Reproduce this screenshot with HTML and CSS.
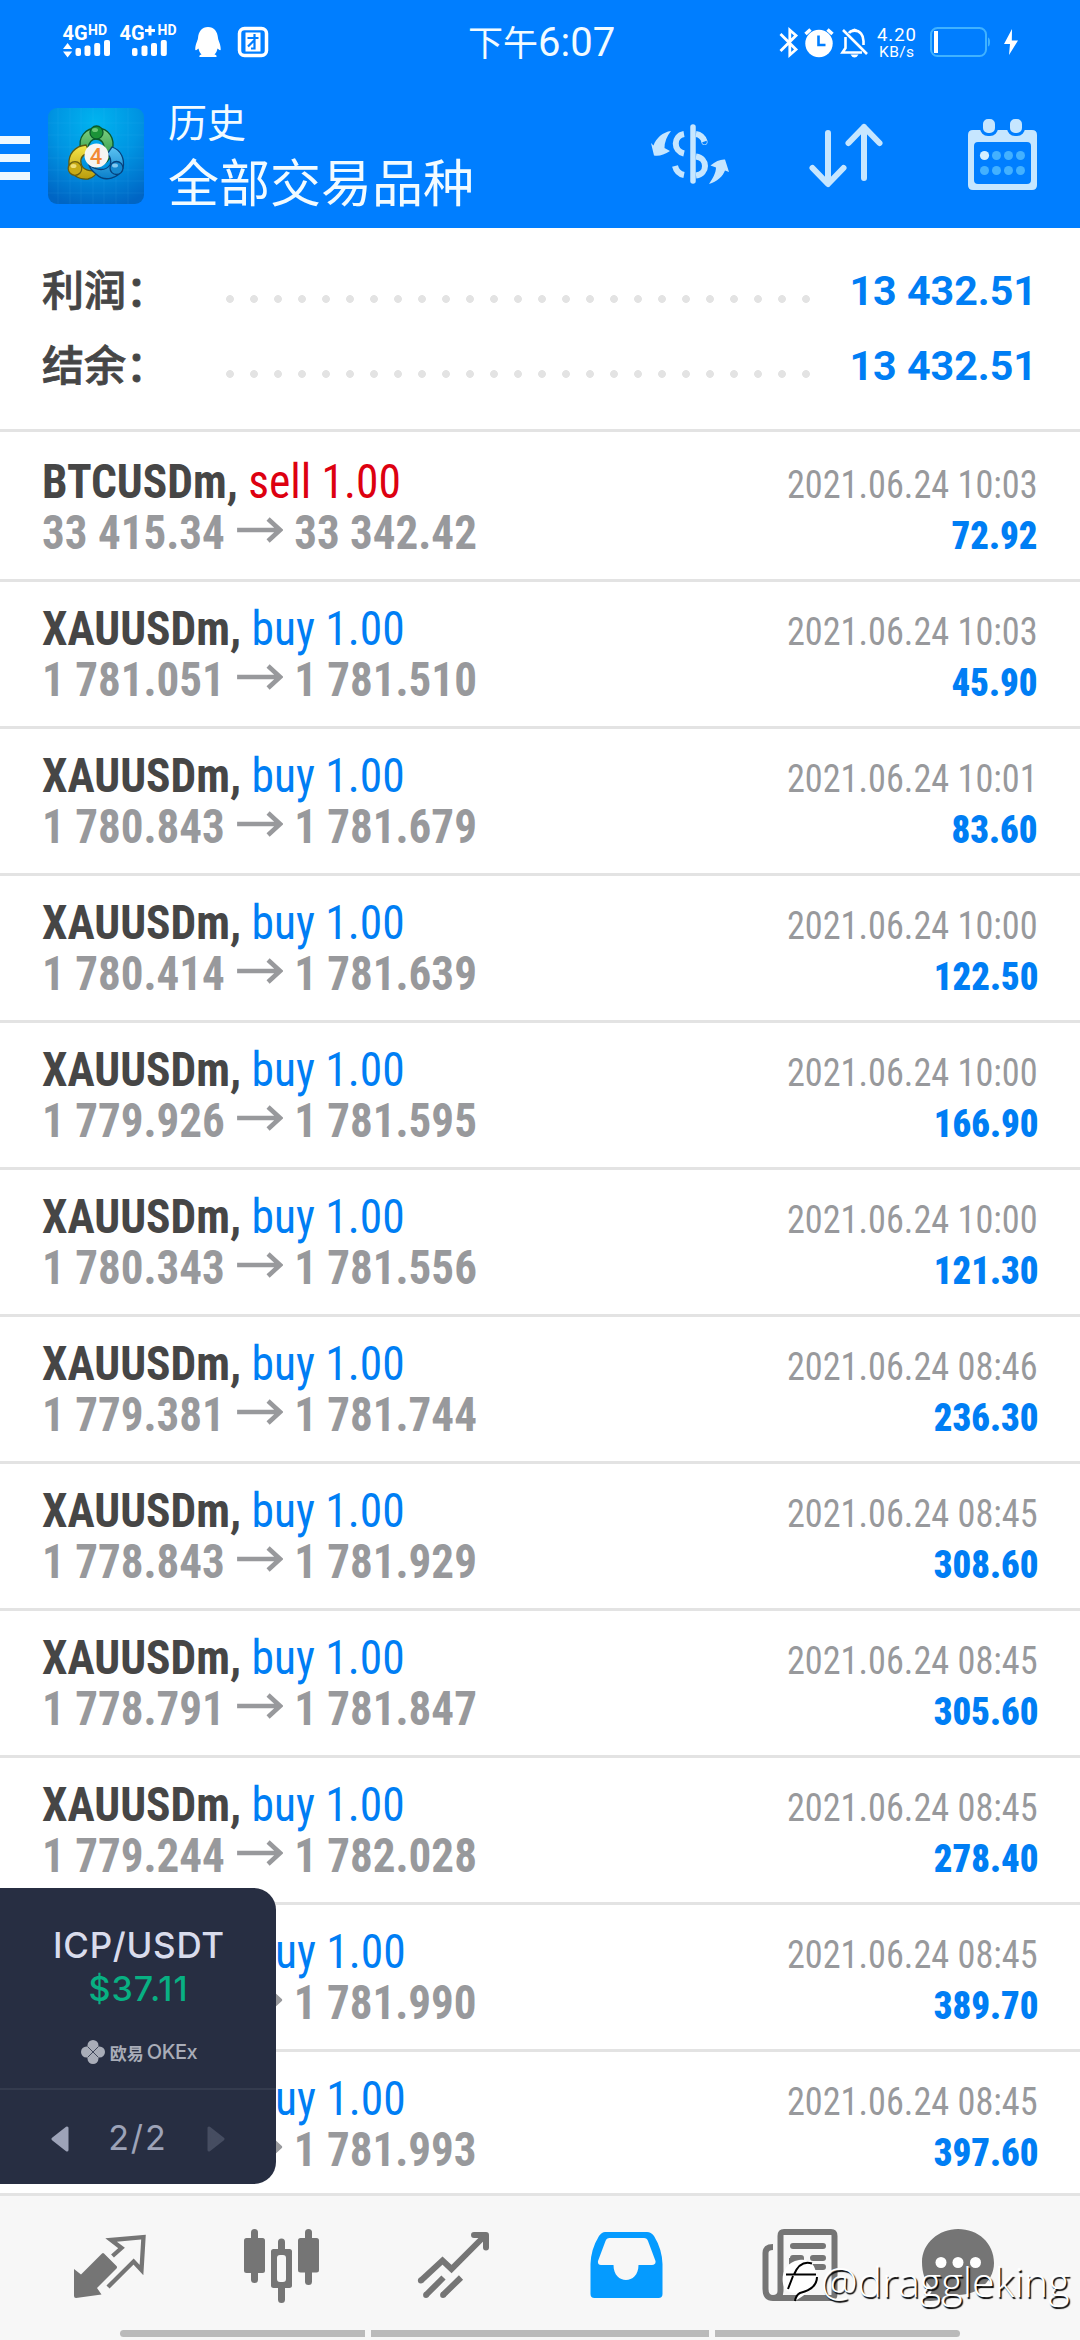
FILE: index.html
```html
<!DOCTYPE html>
<html lang="zh-CN">
<head>
<meta charset="utf-8">
<title>历史</title>
<link rel="stylesheet" href="styles.css">
</head>
<body>
<svg width="0" height="0" class="defs">
  <symbol id="arrow" viewBox="0 0 46 26" preserveAspectRatio="none"><path d="M0 13H42M31 2L43 13L31 24" fill="none" stroke="currentColor" stroke-width="4.6"/></symbol>
</svg>
<div class="screen">
  <header class="header">
    <div class="statusbar">
      <svg class="status-left" viewBox="60 20 220 44" width="220" height="44">
        <g fill="#fff">
          <g font-family="Roboto, sans-serif" font-weight="700">
            <text x="62.500" y="39.500" font-size="20">4G</text>
            <text x="88" y="35" font-size="14">HD</text>
            <text x="119.500" y="39.500" font-size="20">4G</text>
            <text x="157.500" y="35" font-size="14">HD</text>
          </g>
          <path d="M145 29h10v3h-10zM148.500 25.500h3v10h-3z"/>
          <path d="M63 49l4.600-6 4.600 6zM63 51.500h9.200l-4.600 6z"/>
          <rect x="75.500" y="48" width="5.500" height="8" rx="2"/>
          <rect x="84.500" y="45.500" width="6" height="10.500" rx="2"/>
          <rect x="94.200" y="43" width="6" height="13" rx="2"/>
          <rect x="104" y="40" width="6" height="16" rx="2"/>
          <rect x="132" y="48" width="5.500" height="8" rx="2"/>
          <rect x="141.500" y="45.500" width="6" height="10.500" rx="2"/>
          <rect x="151" y="43" width="6" height="13" rx="2"/>
          <rect x="160.800" y="40" width="6" height="16" rx="2"/>
          <path d="M208 27C214 27 217.500 31.500 218 38C218.300 41 221 44.500 220.700 50C219.800 50.500 218.500 49.500 217.500 48.500C217 51 216 53 214.500 54.500C217 55 217 57 216 57H200C199 57 199 55 201.500 54.500C200 53 199 51 198.500 48.500C197.500 49.500 196.200 50.500 195.300 50C195 44.500 197.700 41 198 38C198.500 31.500 202 27 208 27Z"/>
        </g>
        <rect x="239.500" y="28.500" width="27" height="27" rx="5" fill="#007eff" stroke="#fff" stroke-width="3.500"/>
        <rect x="245.500" y="32.500" width="15" height="19" fill="#fff"/>
        <path d="M247.500 38H258.500M254.500 34V48.500H251M254 40.500L248 46.500" fill="none" stroke="#007eff" stroke-width="2.200"/>
      </svg>
      <div class="clock"><span class="ampm">下午</span>6:07</div>
      <svg class="status-right" viewBox="776 20 250 44" width="250" height="44">
        <path d="M780.500 34L796 49.500L789.800 55V30L796 35.500L780.500 51" fill="none" stroke="#fff" stroke-width="2.800"/>
        <circle cx="819" cy="43.500" r="13.700" fill="#fff"/>
        <path d="M805.500 34L810.500 29.500M832.500 34L827.500 29.500" stroke="#fff" stroke-width="3.500"/>
        <path d="M818.500 35.500V45H825.500" fill="none" stroke="#007eff" stroke-width="2.600"/>
        <path d="M843 30L867 54M845.500 37V48L842.500 52.500H862M849 33.200C850 31.500 852 30.600 854.500 30.600C860 30.600 863.500 35 863.500 41V45" fill="none" stroke="#fff" stroke-width="2.600"/>
        <path d="M850.500 54.500H858.500Q857 57.500 854.500 57.500Q852 57.500 850.500 54.500ZM851.500 31Q852 28.500 854.500 28.500Q857 28.500 857.500 31Z" fill="#fff"/>
        <text x="877" y="41" font-family="Roboto, sans-serif" font-size="18.500" textLength="39" fill="#fff">4.20</text>
        <text x="879" y="57" font-family="Roboto, sans-serif" font-size="15.500" textLength="35" fill="#fff">KB/s</text>
        <rect x="931" y="28" width="55" height="28" rx="6.500" fill="none" stroke="#40b2ff" stroke-width="2"/>
        <rect x="934" y="31" width="4" height="22" fill="#fff"/>
        <path d="M988 37.500Q990 38 990 42T988 46.500Z" fill="#40b2ff"/>
        <path d="M1012 29L1004 44H1010L1009 55L1018 40.500H1011.800Z" fill="#fff"/>
      </svg>
    </div>
    <div class="toolbar">
      <svg class="menu" viewBox="0 0 30 44" width="30" height="44"><path d="M0 0H30V8H0ZM0 18H30V26H0ZM0 36H30V44H0Z" fill="#eef8ff"/></svg>
      <svg class="logo" viewBox="0 0 96 96" width="96" height="96">
        <defs>
          <radialGradient id="sky" cx=".5" cy=".15" r=".9"><stop offset="0" stop-color="#00b4f0"/><stop offset=".5" stop-color="#0094e2"/><stop offset="1" stop-color="#0065c4"/></radialGradient>
          <linearGradient id="grn" x2="0" y2="1"><stop offset="0" stop-color="#7ed083"/><stop offset="1" stop-color="#188a32"/></linearGradient>
          <linearGradient id="yel" x2="0" y2="1"><stop offset="0" stop-color="#f7e64a"/><stop offset="1" stop-color="#b99c0c"/></linearGradient>
          <linearGradient id="blu" x2="0" y2="1"><stop offset="0" stop-color="#5cc3f2"/><stop offset="1" stop-color="#0a7fcb"/></linearGradient>
        </defs>
        <rect width="96" height="96" rx="9" fill="url(#sky)"/>
        <path d="M10 0V96M22 0V96M33 0V96M45 0V96M56 0V96M68 0V96M80 0V96M0 15H96M0 27H96M0 39H96M0 50H96M0 62H96M0 73H96M0 85H96" stroke="#5cc8ff" stroke-opacity=".1"/>
        <g stroke-width="1.300">
          <path d="M33 42C29 29 38 20 49 20C60 20 68 30 64 43C63 52 56 57 48 59L56 43C57 35 53 31 48 31C43 31 41 35 40 40Z" fill="url(#grn)" stroke="#0b5a2b"/>
          <path d="M38 37C27 38 20 46 21 57C22 66 30 72 40 71C45 70 49 66 50 62C42 64 34 62 33 55C32 49 36 46 42 45Z" fill="url(#yel)" stroke="#5c5a10"/>
          <path d="M64 39C73 42 77 51 75 60C71 70 57 75 48 66C44 63 42 60 41 57C49 63 58 63 62 57C64 53 62 48 59 46Z" fill="url(#blu)" stroke="#06427e"/>
          <circle cx="48.500" cy="24.500" r="6.500" fill="#1b9338" stroke="#0b5a2b"/>
          <circle cx="27" cy="60.500" r="6.800" fill="#c8ab16" stroke="#6b5f10"/>
          <circle cx="68.500" cy="60" r="6.500" fill="#1588cf" stroke="#06427e"/>
        </g>
        <ellipse cx="47" cy="22" rx="3" ry="2" fill="#8cdc90" opacity=".7"/><ellipse cx="25.500" cy="58" rx="3" ry="2" fill="#fff3a0" opacity=".7"/><ellipse cx="67" cy="57.500" rx="3" ry="2" fill="#b0e4ff" opacity=".7"/>
        <circle cx="48.500" cy="47.500" r="12" fill="#f6f5f3"/>
        <text x="48" y="55.500" text-anchor="middle" font-family="Roboto, sans-serif" font-weight="500" font-size="22" fill="#f28a35">4</text>
      </svg>
      <div class="titles"><div class="subtitle">历史</div><div class="title">全部交易品种</div></div>
      <svg class="actions" viewBox="640 110 440 90" width="440" height="90">
        <g fill="none" stroke="#c6e6ff" stroke-width="5.500">
          <path d="M693 127V181" stroke-linecap="round"/>
          <path d="M684 134C673 136 673 151 684 153.500M696 134C700 134.500 703 137 704.500 141.500" stroke-width="6"/>
          <path d="M696 156.500C708 158 708 174 696 175.500M684 175C679 174 676 170 675 166" stroke-width="6"/>
          <circle cx="704.500" cy="142" r=".3" stroke-linecap="round"/>
        </g>
        <path d="M671 131C663 132 656 138 653.500 145.500L651 143L654 155.500Q661 157 670 151L664.500 148Q664.500 139 671 131Z" fill="#c6e6ff"/>
        <path d="M709 184C712.500 179 716 173 716 167.500L710.500 165.500Q718 159 725 159.500L729 172L725 170.500C723 176 717 182 709 184Z" fill="#c6e6ff"/>
        <path d="M828 133V183M812.500 168L828 184L843.500 168M864 178V127M848.500 143L864 127L879.500 143" fill="none" stroke="#c6e6ff" stroke-width="6" stroke-linecap="round" stroke-linejoin="round"/>
        <path d="M973 130H1032Q1037 130 1037 135V185Q1037 190 1032 190H973Q968 190 968 185V135Q968 130 973 130ZM978 142Q974 142 974 146V180Q974 184 978 184H1027Q1031 184 1031 180V146Q1031 142 1027 142Z" fill="#c6e6ff" fill-rule="evenodd"/>
        <g fill="#c6e6ff" stroke="#007eff" stroke-width="3"><rect x="981.500" y="117.500" width="15" height="17" rx="6.500"/><rect x="1008.500" y="117.500" width="15" height="17" rx="6.500"/></g>
        <circle cx="984.500" cy="155.500" r="4.600" fill="#d6efff"/>
        <g fill="#43b1ff"><circle cx="996.500" cy="155.500" r="4.500"/><circle cx="1008.500" cy="155.500" r="4.500"/><circle cx="1020.500" cy="155.500" r="4.500"/><circle cx="984.500" cy="170.500" r="4.500"/><circle cx="996.500" cy="170.500" r="4.500"/><circle cx="1008.500" cy="170.500" r="4.500"/><circle cx="1020.500" cy="170.500" r="4.500"/></g>
      </svg>
    </div>
  </header>

  <section class="summary">
    <div class="sum"><span class="label">利润：</span><i class="dots"></i><b>13 432.51</b></div>
    <div class="sum"><span class="label">结余：</span><i class="dots"></i><b>13 432.51</b></div>
  </section>

  <main class="deals">
    <article class="deal"><div class="line"><span><b>BTCUSDm,</b> <em class="sell">sell 1.00</em></span><time>2021.06.24 10:03</time></div><div class="line price"><span>33 415.34<svg class="to"><use href="#arrow"/></svg>33 342.42</span><b class="profit">72.92</b></div></article>
    <article class="deal"><div class="line"><span><b>XAUUSDm,</b> <em>buy 1.00</em></span><time>2021.06.24 10:03</time></div><div class="line price"><span>1 781.051<svg class="to"><use href="#arrow"/></svg>1 781.510</span><b class="profit">45.90</b></div></article>
    <article class="deal"><div class="line"><span><b>XAUUSDm,</b> <em>buy 1.00</em></span><time>2021.06.24 10:01</time></div><div class="line price"><span>1 780.843<svg class="to"><use href="#arrow"/></svg>1 781.679</span><b class="profit">83.60</b></div></article>
    <article class="deal"><div class="line"><span><b>XAUUSDm,</b> <em>buy 1.00</em></span><time>2021.06.24 10:00</time></div><div class="line price"><span>1 780.414<svg class="to"><use href="#arrow"/></svg>1 781.639</span><b class="profit">122.50</b></div></article>
    <article class="deal"><div class="line"><span><b>XAUUSDm,</b> <em>buy 1.00</em></span><time>2021.06.24 10:00</time></div><div class="line price"><span>1 779.926<svg class="to"><use href="#arrow"/></svg>1 781.595</span><b class="profit">166.90</b></div></article>
    <article class="deal"><div class="line"><span><b>XAUUSDm,</b> <em>buy 1.00</em></span><time>2021.06.24 10:00</time></div><div class="line price"><span>1 780.343<svg class="to"><use href="#arrow"/></svg>1 781.556</span><b class="profit">121.30</b></div></article>
    <article class="deal"><div class="line"><span><b>XAUUSDm,</b> <em>buy 1.00</em></span><time>2021.06.24 08:46</time></div><div class="line price"><span>1 779.381<svg class="to"><use href="#arrow"/></svg>1 781.744</span><b class="profit">236.30</b></div></article>
    <article class="deal"><div class="line"><span><b>XAUUSDm,</b> <em>buy 1.00</em></span><time>2021.06.24 08:45</time></div><div class="line price"><span>1 778.843<svg class="to"><use href="#arrow"/></svg>1 781.929</span><b class="profit">308.60</b></div></article>
    <article class="deal"><div class="line"><span><b>XAUUSDm,</b> <em>buy 1.00</em></span><time>2021.06.24 08:45</time></div><div class="line price"><span>1 778.791<svg class="to"><use href="#arrow"/></svg>1 781.847</span><b class="profit">305.60</b></div></article>
    <article class="deal"><div class="line"><span><b>XAUUSDm,</b> <em>buy 1.00</em></span><time>2021.06.24 08:45</time></div><div class="line price"><span>1 779.244<svg class="to"><use href="#arrow"/></svg>1 782.028</span><b class="profit">278.40</b></div></article>
    <article class="deal clipped"><div class="line"><span><em>uy 1.00</em></span><time>2021.06.24 08:45</time></div><div class="line price"><span><svg class="to"><use href="#arrow"/></svg>1 781.990</span><b class="profit">389.70</b></div></article>
    <article class="deal clipped"><div class="line"><span><em>uy 1.00</em></span><time>2021.06.24 08:45</time></div><div class="line price"><span><svg class="to"><use href="#arrow"/></svg>1 781.993</span><b class="profit">397.60</b></div></article>
  </main>

  <nav class="tabs">
    <div class="tab-row">
      <svg viewBox="24 2216 172 100"><path d="M74 2269L81 2274.500L102 2253.500Q103 2252.500 104 2253.500L116.500 2266Q117.500 2267 116.500 2268.500L97 2288L101.500 2294.500L76 2298Q74 2298 74 2296Z" fill="#757575"/><path d="M112.500 2256L121.500 2248L111 2240L143.500 2237L141.500 2270L133.600 2261.500L108 2287" fill="none" stroke="#757575" stroke-width="4.300"/></svg>
      <svg viewBox="196 2216 172 100"><g fill="#757575"><rect x="244" y="2238" width="21" height="35" rx="2.500"/><rect x="251" y="2229" width="7" height="54" rx="3.500"/><rect x="298" y="2238" width="21" height="34.500" rx="2.500"/><rect x="305" y="2229" width="7" height="56" rx="3.500"/><path d="M278 2249V2242A3.500 3.500 0 0 1 285 2242V2249H289.500Q292 2249 292 2251.500V2285.500Q292 2288 289.500 2288H285V2299.500A3.500 3.500 0 0 1 278 2299.500V2288H273.500Q271 2288 271 2285.500V2251.500Q271 2249 273.500 2249ZM280 2255Q277 2255 277 2258V2279Q277 2282 280 2282H283Q286 2282 286 2279V2258Q286 2255 283 2255Z" fill-rule="evenodd"/></g></svg>
      <svg viewBox="368 2216 172 100"><g fill="none" stroke="#757575" stroke-width="6"><path d="M421 2280.500L442.500 2260.500L451.500 2269L485 2235.500M426 2295L443.500 2277.500M443 2295L461 2277.500"/><path d="M474 2235H486V2247.500" stroke-linecap="round" stroke-linejoin="round"/></g><g fill="#757575"><circle cx="420.800" cy="2280.500" r="2.900"/><circle cx="426" cy="2295" r="2.900"/><circle cx="443" cy="2295" r="2.900"/></g></svg>
      <svg viewBox="540 2216 172 100"><path d="M605 2232H647Q651 2232 654 2236Q662 2249 662.500 2264V2294Q662.500 2298 658.500 2298H594.500Q590.500 2298 590.500 2294V2264Q591 2249 599 2236Q602 2232 605 2232ZM609.500 2238Q606.500 2238 605.500 2241L598 2261Q597.500 2265 601 2265H613.500C613.500 2285 638.500 2285 638.500 2265H652Q656 2265 655.500 2261L648 2241Q647 2238 644 2238Z" fill="#059bff" fill-rule="evenodd"/></svg>
      <svg viewBox="712 2216 172 100"><g fill="none" stroke="#757575" stroke-width="6"><path d="M773 2247Q765.500 2247 765.500 2253V2289Q765.500 2298 773 2298H831Q834.500 2298 834.500 2294V2236Q834.500 2232 831 2232H784Q780.500 2232 780.500 2236V2291Q780.500 2298 773 2298"/><path d="M793 2246H823" stroke-linecap="round"/><path d="M793 2258H801M813 2258H823M813 2267H823" stroke-linecap="round"/><path d="M792 2258V2271H801V2258"/></g></svg>
      <svg viewBox="884 2216 172 100"><path d="M958 2229C978 2229 994 2243 994 2263C994 2280 979 2295 958 2295C949 2298 934 2303 922 2300Q932 2296 932 2288C925 2282 922 2273 922 2262C922 2243 939 2229 958 2229Z" fill="#757575"/><g fill="#fff"><circle cx="941" cy="2262.500" r="5.500"/><circle cx="958" cy="2262.500" r="5.500"/><circle cx="975.500" cy="2262.500" r="5.500"/></g></svg>
    </div>
    <div class="gesture"><i></i><i></i><i></i></div>
  </nav>

  <aside class="widget">
    <div class="quote">
      <div class="pair">ICP/USDT</div>
      <div class="rate">$37.11</div>
      <div class="brand"><svg viewBox="0 0 24 24" width="24" height="24"><g fill="#a9adb8"><circle cx="12" cy="5.500" r="5.500"/><circle cx="5.500" cy="12" r="5.500"/><circle cx="18.500" cy="12" r="5.500"/><circle cx="12" cy="18.500" r="5.500"/><circle cx="12" cy="12" r="5"/></g><path d="M7 7L17 17M17 7L7 17" stroke="#272e42" stroke-width=".8"/></svg><span class="cn">欧易</span><span class="en">OKEx</span></div>
    </div>
    <div class="pager">
      <svg viewBox="0 0 18 26" width="18" height="26"><path d="M16 2V24L2 13Z" fill="#9da3b8" stroke="#9da3b8" stroke-width="3" stroke-linejoin="round"/></svg>
      <span>2/2</span>
      <svg viewBox="0 0 18 26" width="18" height="26"><path d="M2 2V24L16 13Z" fill="#464d61" stroke="#464d61" stroke-width="3" stroke-linejoin="round"/></svg>
    </div>
  </aside>

  <div class="watermark">
    <svg viewBox="0 0 40 46" width="40" height="46"><path d="M18 2C29 0 36 8 35 19C34 29 26 36 14 43Q16 39 15 35Q8 35 4 31C-1 22 1 5 18 2Z" fill="#fff"/><path d="M5 16.500H13C17 7 23 3 31 5.500M13 16.500H35M12 18L7 31M36 19C36 29 27 33 19 35Q15 37 14 43" fill="none" stroke="#000" stroke-width="2"/></svg>
    <span>@draggleking</span>
  </div>
</div>
</body>
</html>
```
FILE: styles.css
```css
* { box-sizing: border-box; }
body { margin: 0; background: #fff; font-family: Roboto, "Noto Sans CJK SC", sans-serif; }
.defs { position: absolute; }
.screen { position: relative; width: 1080px; height: 2340px; overflow: hidden; display: flex; flex-direction: column; }
svg { display: block; flex: none; }

.header { height: 228px; background: #007eff; color: #f2fbff; }
.statusbar { height: 84px; padding: 20px 54px 0 60px; display: flex; }
.clock { display: flex; align-items: baseline; font-size: 40px; line-height: 46px; width: 148px; margin: 0 160px 0 188px; white-space: nowrap; }
.ampm { font-size: 35px; }
.toolbar { height: 144px; display: flex; align-items: flex-start; }
.menu { margin-top: 52px; }
.logo { margin: 24px 0 0 18px; }
.titles { margin: 12px 0 0 24px; flex: 1; white-space: nowrap; }
.subtitle { font-size: 39px; line-height: 56px; }
.title { font-size: 51px; line-height: 66px; }
.actions { margin-top: 26px; }

.summary { height: 204px; border-bottom: 3px solid #e3e3e3; padding: 25px 43px 0 42px; }
.sum { height: 75px; display: flex; align-items: center; }
.label { width: 184px; font-size: 42px; font-weight: 500; color: #464646; line-height: 75px; padding-top: 1px; -webkit-text-stroke: .8px #464646; }
.dots { width: 584px; height: 8px; margin-top: 17px; background: radial-gradient(circle at 4px 4px, #e3e3e3 3.500px, transparent 4.300px) 0 0 / 24px 8px repeat-x; }
.sum b { margin-left: auto; font-size: 41.200px; color: #007ef4; padding-top: 1px; }

.deals { height: 1761px; overflow: hidden; font-family: "Roboto Condensed", Roboto, sans-serif; }
.deal { height: 147px; padding: 21px 42px 0; border-top: 3px solid #e3e3e3; }
.deal:first-child { border-top-color: #fff; }
.line { display: flex; justify-content: space-between; align-items: baseline; height: 51px; line-height: 51px; font-size: 48px; color: #464646; white-space: nowrap; }
.line > span { transform: scaleX(.947); transform-origin: left; }
.price > span { transform: scaleX(.938); }
.line em { font-style: normal; color: #007ef4; }
.line em.sell { color: #dd0010; }
.line time { font-size: 39px; color: #98999c; transform: scaleX(.93); transform-origin: right; }
.price { color: #98999c; font-weight: 700; }
.line .profit { font-size: 39px; color: #007ef4; transform: scaleX(.94); transform-origin: right; }
.to { display: inline-block; width: 49px; height: 26px; margin: 0 12px 0 13px; vertical-align: 6px; }
.deal.clipped { padding-left: 275px; }
.clipped .to { margin-left: -41px; }

.tabs { height: 147px; border-top: 3px solid #e3e3e3; background: #f7f7f7; }
.tab-row { display: grid; grid-template-columns: repeat(6, 172px); padding: 20px 24px 0; height: 134px; }
.tab-row svg { width: 172px; height: 100px; }
.gesture { display: grid; grid-template-columns: 245px 338px 245px; gap: 6px; padding-left: 120px; }
.gesture i { height: 7px; background: #bababa; }
.gesture i:first-child { border-radius: 4px 0 0 4px; }
.gesture i:last-child { border-radius: 0 4px 4px 0; }

.widget { position: absolute; left: 0; top: 1888px; width: 276px; height: 296px; background: #272e42; border-radius: 0 22px 22px 0; font-family: Inter, "Noto Sans CJK SC", sans-serif; text-align: center; }
.quote { height: 202px; border-bottom: 2px solid #343b4e; padding-top: 36px; }
.pair { font-size: 35px; line-height: 43px; letter-spacing: .7px; font-weight: 450; color: #d9dcec; padding-left: 2px; }
.rate { font-size: 34px; line-height: 43px; letter-spacing: 1px; font-weight: 550; color: #08b083; padding-left: 1px; }
.brand { display: flex; justify-content: center; align-items: center; margin-top: 28px; height: 28px; color: #a9adb8; padding-left: 2px; }
.cn { margin-left: 5px; font-size: 17px; font-weight: 700; }
.en { margin-left: 3px; font-size: 20px; font-weight: 500; letter-spacing: -.5px; }
.pager { height: 94px; display: flex; justify-content: space-between; align-items: center; padding: 4px 51px 0; color: #9da3b8; font-size: 34px; letter-spacing: 2px; }
.pager span { margin-top: -4px; }

.watermark { position: absolute; left: 781px; top: 2258px; display: flex; color: #fff; font: 300 41.200px/46px "Open Sans", sans-serif; text-shadow: 1.500px 1.500px 1px #000; white-space: nowrap; }
```
